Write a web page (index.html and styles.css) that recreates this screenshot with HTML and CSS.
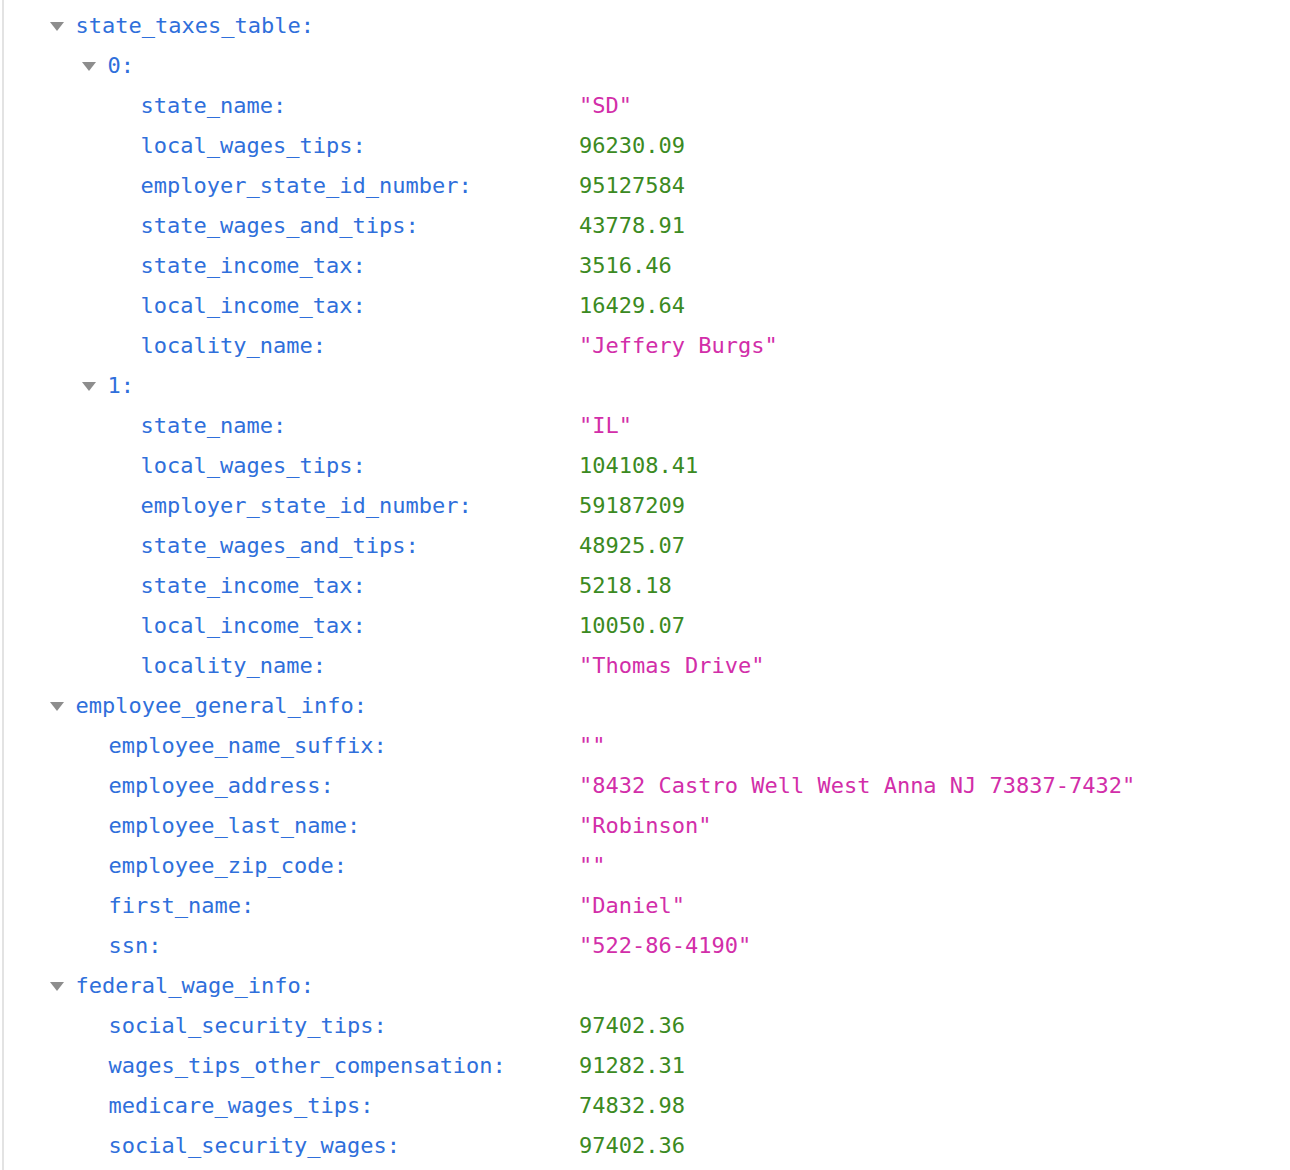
FILE: index.html
```html
<!DOCTYPE html>
<html>
<head>
<meta charset="utf-8">
<link rel="stylesheet" href="styles.css">
</head>
<body>
<div class="tree">
  <div class="row"><div class="key l0"><span class="tog"></span>state_taxes_table:</div><div class="val"></div></div>
  <div class="row"><div class="key l1"><span class="tog"></span>0:</div><div class="val"></div></div>
  <div class="row"><div class="key l2">state_name:</div><div class="val str">"SD"</div></div>
  <div class="row"><div class="key l2">local_wages_tips:</div><div class="val num">96230.09</div></div>
  <div class="row"><div class="key l2">employer_state_id_number:</div><div class="val num">95127584</div></div>
  <div class="row"><div class="key l2">state_wages_and_tips:</div><div class="val num">43778.91</div></div>
  <div class="row"><div class="key l2">state_income_tax:</div><div class="val num">3516.46</div></div>
  <div class="row"><div class="key l2">local_income_tax:</div><div class="val num">16429.64</div></div>
  <div class="row"><div class="key l2">locality_name:</div><div class="val str">"Jeffery Burgs"</div></div>
  <div class="row"><div class="key l1"><span class="tog"></span>1:</div><div class="val"></div></div>
  <div class="row"><div class="key l2">state_name:</div><div class="val str">"IL"</div></div>
  <div class="row"><div class="key l2">local_wages_tips:</div><div class="val num">104108.41</div></div>
  <div class="row"><div class="key l2">employer_state_id_number:</div><div class="val num">59187209</div></div>
  <div class="row"><div class="key l2">state_wages_and_tips:</div><div class="val num">48925.07</div></div>
  <div class="row"><div class="key l2">state_income_tax:</div><div class="val num">5218.18</div></div>
  <div class="row"><div class="key l2">local_income_tax:</div><div class="val num">10050.07</div></div>
  <div class="row"><div class="key l2">locality_name:</div><div class="val str">"Thomas Drive"</div></div>
  <div class="row"><div class="key l0"><span class="tog"></span>employee_general_info:</div><div class="val"></div></div>
  <div class="row"><div class="key l1">employee_name_suffix:</div><div class="val str">""</div></div>
  <div class="row"><div class="key l1">employee_address:</div><div class="val str">"8432 Castro Well West Anna NJ 73837-7432"</div></div>
  <div class="row"><div class="key l1">employee_last_name:</div><div class="val str">"Robinson"</div></div>
  <div class="row"><div class="key l1">employee_zip_code:</div><div class="val str">""</div></div>
  <div class="row"><div class="key l1">first_name:</div><div class="val str">"Daniel"</div></div>
  <div class="row"><div class="key l1">ssn:</div><div class="val str">"522-86-4190"</div></div>
  <div class="row"><div class="key l0"><span class="tog"></span>federal_wage_info:</div><div class="val"></div></div>
  <div class="row"><div class="key l1">social_security_tips:</div><div class="val num">97402.36</div></div>
  <div class="row"><div class="key l1">wages_tips_other_compensation:</div><div class="val num">91282.31</div></div>
  <div class="row"><div class="key l1">medicare_wages_tips:</div><div class="val num">74832.98</div></div>
  <div class="row"><div class="key l1">social_security_wages:</div><div class="val num">97402.36</div></div>
</div>
</body>
</html>
```

FILE: styles.css
```css
html, body {
  margin: 0;
  padding: 0;
  background: #ffffff;
}
body {
  font-family: "DejaVu Sans Mono", "Liberation Mono", monospace;
  font-size: 22px;
  overflow: hidden;
}
.tree {
  margin-left: 2px;
  border-left: 2px solid #e3e3e3;
  padding-top: 6px;
  min-height: 1164px;
}
.row {
  display: grid;
  grid-template-columns: 575px 1fr;
  height: 40px;
  line-height: 40px;
  white-space: nowrap;
}
.key {
  color: #2f6fdb;
}
.l0 { padding-left: 72.5px; }
.l1 { padding-left: 104.5px; }
.l2 { padding-left: 136.5px; }
.tog {
  display: inline-block;
  width: 0;
  height: 0;
  border-left: 7.5px solid transparent;
  border-right: 7.5px solid transparent;
  border-top: 9px solid #8d8d8d;
  margin-left: -27px;
  margin-right: 12px;
  vertical-align: middle;
  position: relative;
  top: -1px;
}
.str { color: #d22ea9; }
.num { color: #3b8a22; }
```
